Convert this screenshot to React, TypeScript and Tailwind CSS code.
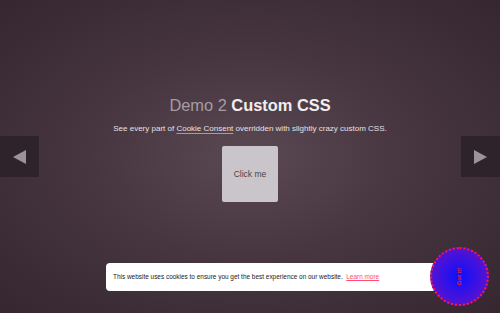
export default function App() {
  return (
    <div
      className="relative h-[313px] w-[500px] overflow-hidden bg-[radial-gradient(ellipse_at_50%_50%,#5a4953_0%,#473640_45%,#35262f_100%)]"
      style={{ fontFamily: '"Liberation Sans", Arial, sans-serif' }}
    >
      <main className="flex h-full flex-col items-center pt-[96px]">
        <h1 className="text-[16.4px] leading-[19px] text-[#a69ca3]">
          Demo 2 <span className="font-bold text-[#f1edf0]">Custom CSS</span>
        </h1>
        <p className="mt-[9px] text-[8px] leading-[10px] text-[#e6e0e4]">
          See every part of{" "}
          <a className="underline decoration-[#a69ca3] underline-offset-[2px]">Cookie Consent</a>{" "}
          overridden with slightly crazy custom CSS.
        </p>
        <button className="mt-[12px] flex h-[56px] w-[56px] items-center justify-center rounded-[2px] bg-[#cac5ca] text-[8.5px] text-[#48464a]">
          Click me
        </button>
      </main>

      <div className="absolute left-0 top-[136px] flex h-[41px] w-[39px] items-center justify-center bg-[#2f232b]">
        <svg width="13" height="14" viewBox="0 0 13 14">
          <path d="M0 7 L13 0 L13 14 Z" fill="#9c939a" />
        </svg>
      </div>
      <div className="absolute right-0 top-[136px] flex h-[41px] w-[39px] items-center justify-center bg-[#2f232b]">
        <svg width="13" height="14" viewBox="0 0 13 14">
          <path d="M13 7 L0 0 L0 14 Z" fill="#9c939a" />
        </svg>
      </div>

      <div className="absolute left-[106px] top-[263px] flex h-[28px] w-[330px] items-center rounded-[4px] bg-white pl-[7px] text-[6.45px] text-[#222]">
        <span>This website uses cookies to ensure you get the best experience on our website.</span>
        <a className="ml-[3.5px] text-[#ff4d6d] underline">Learn more</a>
      </div>
      <div className="absolute left-[430px] top-[247px] flex h-[59px] w-[59px] items-center justify-center rounded-full border-2 border-dotted border-[#ff1a3c] bg-[radial-gradient(circle,#0a10ff_0%,#4a12d8_60%,#6a14c0_100%)]">
        <span className="-rotate-90 text-[6px] font-bold text-[#e0203a]">Got it!</span>
      </div>
    </div>
  );
}
